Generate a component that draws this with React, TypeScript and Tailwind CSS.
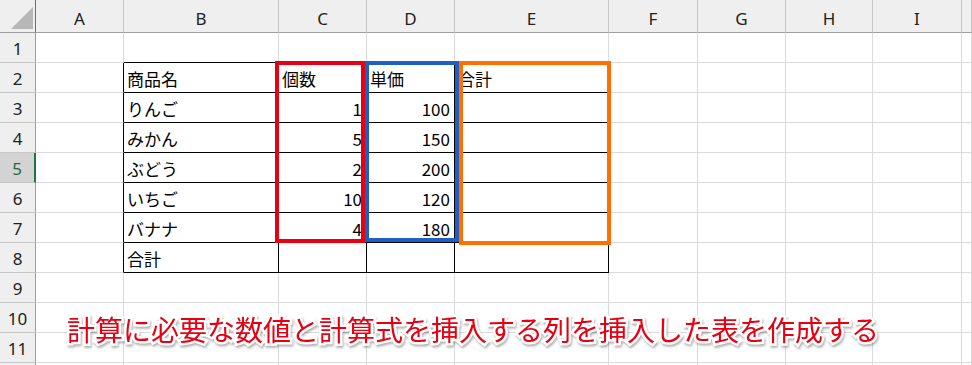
const COLS = ["A", "B", "C", "D", "E", "F", "G", "H", "I", ""];

// cell values by row number -> [B, C, D, E]
const DATA: Record<number, [string, string, string, string]> = {
  2: ["商品名", "個数", "単価", "合計"],
  3: ["りんご", "1", "100", ""],
  4: ["みかん", "5", "150", ""],
  5: ["ぶどう", "2", "200", ""],
  6: ["いちご", "10", "120", ""],
  7: ["バナナ", "4", "180", ""],
  8: ["合計", "", "", ""],
};

const jp = "font-['Yu_Gothic','Noto_Sans_CJK_JP',sans-serif]";

const Cell = ({ row, col }: { row: number; col: number }) => {
  // col: 1 = A ... 10 = J
  const inTable = row >= 2 && row <= 8 && col >= 2 && col <= 5;
  const blackBottom = row >= 1 && row <= 8 && col >= 2 && col <= 5;
  const blackRight = row >= 2 && row <= 8 && col >= 1 && col <= 5;
  const value = inTable ? DATA[row][col - 2] : "";
  const numeric = inTable && row > 2 && (col === 3 || col === 4);

  return (
    <div
      className={`flex items-center pt-[3px] border-r border-b text-[17px] text-black ${jp} ${
        blackBottom ? "border-b-black" : "border-b-[#dadada]"
      } ${blackRight ? "border-r-black" : "border-r-[#dadada]"} ${
        numeric ? "justify-end pr-[4px]" : "pl-[3px]"
      }`}
    >
      {value}
    </div>
  );
};

const App = () => {
  const rows = Array.from({ length: 12 }, (_, i) => i + 1);

  return (
    <div className="relative w-[972px] h-[365px] overflow-hidden bg-white">
      <div className="grid grid-cols-[36px_88px_155px_88px_88px_154px_89px_88px_87px_89px_1fr] grid-rows-[33px_repeat(11,30px)_1fr] h-full">
        {/* corner */}
        <div className="relative bg-[#efefef] border-r border-b border-r-[#6f6f6f] border-b-[#9f9f9f]">
          <svg className="absolute right-[2px] bottom-[3px]" width="22" height="22" viewBox="0 0 22 22">
            <polygon points="22,0 22,22 0,22" fill="#b7b7b7" />
          </svg>
        </div>

        {/* column headings */}
        {COLS.map((c) => (
          <div
            key={c || "J"}
            className="flex items-center justify-center pt-[6px] bg-[#efefef] border-b border-b-[#9f9f9f] border-r border-r-[#c6c6c6] text-[17px] text-[#222] font-['Noto_Sans',sans-serif]"
          >
            {c}
          </div>
        ))}

        {rows.map((r) => (
          <div key={r} className="contents">
            {r === 5 ? (
              <div className="flex items-center justify-center pt-[2px] bg-[#d3d3d3] border-b border-b-[#c6c6c6] border-r-2 border-r-[#217346] text-[17px] text-[#1d6a45] font-['Noto_Sans',sans-serif]">
                {r}
              </div>
            ) : (
              <div className="flex items-center justify-center pt-[2px] bg-[#efefef] border-b border-b-[#c6c6c6] border-r border-r-[#9f9f9f] text-[17px] text-[#222] font-['Noto_Sans',sans-serif]">
                {r < 12 ? r : ""}
              </div>
            )}
            {COLS.map((_, ci) => (
              <Cell key={ci} row={r} col={ci + 1} />
            ))}
          </div>
        ))}
      </div>

      {/* highlight boxes */}
      <div className="absolute left-[275px] top-[61px] w-[90px] h-[182px] border-4 border-[#e60012]" />
      <div className="absolute left-[365px] top-[61px] w-[94px] h-[181px] border-4 border-[#1f5fbf]" />
      <div className="absolute left-[459px] top-[61px] w-[152px] h-[184px] border-4 border-[#ff7000]" />

      {/* caption */}
      <div className="absolute left-[67px] top-[315px] text-[28px] leading-none text-[#e60012] font-['Noto_Sans_CJK_JP',sans-serif] [-webkit-text-stroke:5px_white] [paint-order:stroke_fill] drop-shadow-[1px_2px_1px_rgba(0,0,0,0.3)] whitespace-nowrap">
        計算に必要な数値と計算式を挿入する列を挿入した表を作成する
      </div>
    </div>
  );
};

export default App;
